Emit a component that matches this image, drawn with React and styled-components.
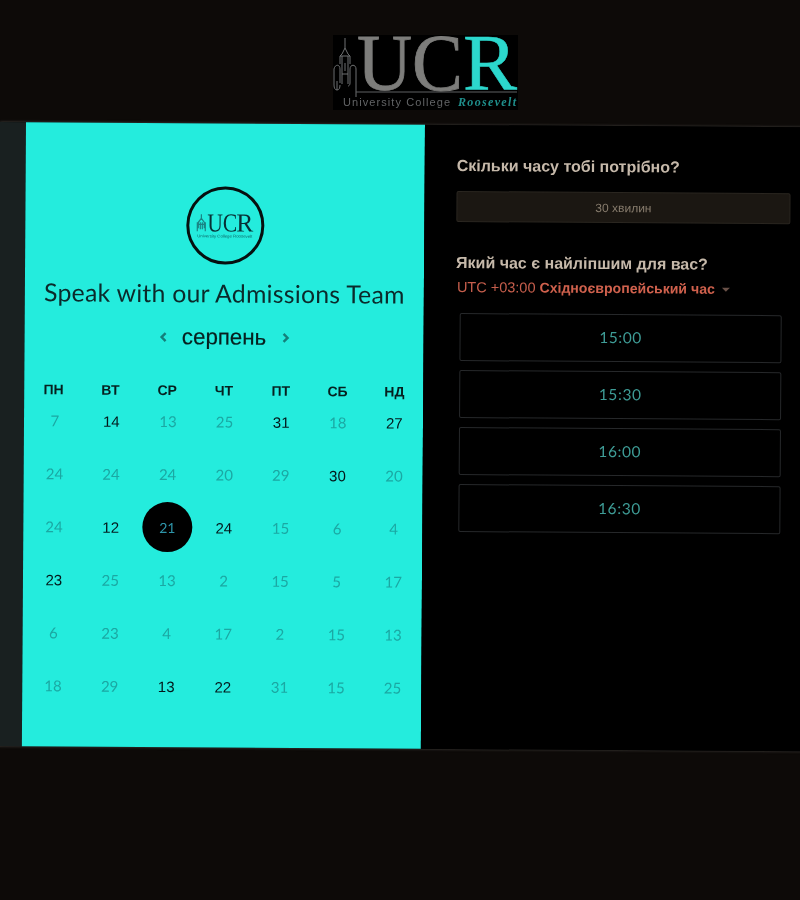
import React from 'react';
import styled, { createGlobalStyle } from 'styled-components';

const Global = createGlobalStyle`
  html, body { margin: 0; padding: 0; background: #0d0a08; }
  body { width: 800px; height: 900px; overflow: hidden; font-family: "Liberation Sans", Arial, sans-serif; }
`;
const Page = styled.div`
  width: 800px; height: 900px; overflow: hidden; background: #0d0a08;
  display: flex; flex-direction: column; filter: blur(0.4px);
`;
const Header = styled.header`
  height: 122px; flex: none; display: flex; justify-content: flex-start; padding: 35px 0 0 333px; box-sizing: border-box;
`;
const Card = styled.main`
  width: 830px; height: 624px; flex: none; display: flex; background: #000;
  transform-origin: 0 0; transform: rotate(0.38deg);
  box-shadow: 0 0 3px rgba(90, 88, 84, .8);
`;
const Strip = styled.div`width: 26px; flex: none; background: #192020;`;
const Left = styled.section`
  width: 399px; flex: none; background: #24ecdd; padding-top: 63px; box-sizing: border-box;
  display: flex; flex-direction: column; align-items: center;
`;
const Avatar = styled.div`
  width: 78px; height: 78px; box-sizing: border-box; border: 3px solid #06100f; border-radius: 50%;
  display: flex; align-items: center; justify-content: center;
`;
const Title = styled.h1`
  margin: 14px 0 0; height: 30px; font: 400 24.8px/30px Lato, sans-serif; color: #0b2a2b; white-space: nowrap; letter-spacing: .25px;
`;
const Month = styled.div`
  margin-top: 14px; height: 30px; display: flex; align-items: center; gap: 8px;
`;
const MonthName = styled.span`font-size: 22.3px; color: #07201f; width: 92px; text-align: center; white-space: nowrap; -webkit-text-stroke: .2px #07201f;`;
const Arrow = styled.svg`width: 14px; height: 14px; flex: none; fill: none; stroke: #14807b; stroke-width: 2.4;`;
const Weeks = styled.div`
  margin-top: 30px; width: 100%; box-sizing: border-box; padding-left: 1px; display: grid; grid-template-columns: repeat(7, 56.8px); height: 16px;
`;
const WeekDay = styled.div`font: 700 14px/16px "Liberation Sans", sans-serif; color: #06201f; text-align: center;`;
const Days = styled.div`
  margin-top: 3px; width: 100%; box-sizing: border-box; padding-left: 2.5px; display: grid; grid-template-columns: repeat(7, 56.6px); grid-auto-rows: 40px; row-gap: 13px;
`;
const Cell = styled.div`display: flex; align-items: center; justify-content: center;`;
const Day = styled.span`
  flex: none; width: 50px; height: 50px; border-radius: 50%; display: flex; align-items: center; justify-content: center;
  font: ${p => p.$state === 'on' ? '400 15px "Liberation Sans", sans-serif' : p.$state === 'sel' ? '400 14px Lato, sans-serif' : '400 15px Lato, sans-serif'};
  color: ${p => p.$state === 'on' ? '#03171a' : p.$state === 'sel' ? '#2e94a8' : '#1ba8a3'};
  background: ${p => p.$state === 'sel' ? '#000' : 'transparent'};
`;
const Right = styled.section`
  flex: 1; background: #000; padding: 31px 0 0 32px; box-sizing: border-box; display: flex; flex-direction: column; align-items: flex-start;
`;
const Heading = styled.h2`
  margin: 0; font: 700 16px/20px "Liberation Sans", sans-serif; color: #c6b9aa; white-space: nowrap;
`;
const Duration = styled.div`
  margin-top: 15px; width: 334px; height: 31px; box-sizing: border-box; background: #1b1712; border: 1px solid #2a2620; border-radius: 2px;
  display: flex; align-items: center; justify-content: center; font-size: 12px; color: #877c6d;
`;
const SecondHeading = styled(Heading)`margin-top: 31px;`;
const Zone = styled.div`
  margin: 4px 0 0 1px; height: 20px; display: flex; align-items: center; gap: 4px; font-size: 14.5px; color: #c65e4c; white-space: nowrap;
`;
const ZoneName = styled.b`font-weight: 700; font-size: 14.1px; color: #d0614d;`;
const Caret = styled.i`
  width: 0; height: 0; margin: 2px 0 0 3px; border: 4px solid transparent; border-bottom-width: 0; border-top-color: #6a5148;
`;
const Slots = styled.div`margin: 16px 0 0 4px; display: flex; flex-direction: column; gap: 9px;`;
const Slot = styled.button`
  width: 322px; height: 48px; box-sizing: border-box; background: #000; border: 1px solid #26282a; border-radius: 2px;
  font: 400 15.5px Lato, sans-serif; letter-spacing: .6px; color: #3e9c96; padding: 0 0 2px;
`;

const UCRLogo = () => (
  <svg width="185" height="75" viewBox="0 0 185 75" role="img" aria-label="UCR">
    <rect width="185" height="75" fill="#000" />
    <g fill="none" stroke="#6f7172" strokeWidth="1">
      <path d="M12 3v10M12 13l-3 6-2 2v8M12 13l3 6 2 2v8M7 21h10M9 21v18h6V21" />
      <path d="M1 34v16c0 3 1 5 3 5v-9M1 34c1-5 6-5 6 0v14M17 34c0-5 6-5 6 0v28M17 34v14c0 2-1 3-2 3M9 39v10M15 39v10M12 28v8M4 55c2 0 3-2 3-5" />
    </g>
    <path d="M23 57h161" stroke="#5f6162" strokeWidth="1" fill="none" />
    <text x="24" y="55" fontFamily="Liberation Serif, serif" fontSize="80" fill="#7d7d7b" stroke="#7d7d7b" strokeWidth=".8" textLength="106" lengthAdjust="spacingAndGlyphs">UC</text>
    <text x="130" y="55" fontFamily="Liberation Serif, serif" fontSize="80" fill="#2cd8cd" stroke="#2cd8cd" strokeWidth=".6" textLength="54" lengthAdjust="spacingAndGlyphs">R</text>
    <text x="10" y="71" fontFamily="Liberation Sans, sans-serif" fontSize="11" fill="#626466" textLength="107" lengthAdjust="spacing">University College</text>
    <text x="125" y="71" fontFamily="Liberation Serif, serif" fontStyle="italic" fontWeight="700" fontSize="12" fill="#1f8f8c" textLength="58" lengthAdjust="spacing">Roosevelt</text>
  </svg>
);

const SmallLogo = () => (
  <svg width="60" height="34" viewBox="0 0 60 34" role="img" aria-label="UCR">
    <g fill="none" stroke="#1a8484" strokeWidth="1.2"><path d="M6 6v4M3 20v-6l3-4 3 4v6M3 16h6M5 14v7M7 14v7M2 14v9M10 14v9" /></g>
    <text x="12" y="23" fontFamily="Liberation Serif, serif" fontSize="26" fill="#082f34" textLength="30" lengthAdjust="spacingAndGlyphs">UC</text>
    <text x="41" y="23" fontFamily="Liberation Serif, serif" fontSize="26" fill="#082f34" textLength="17" lengthAdjust="spacingAndGlyphs">R</text>
    <text x="2" y="29" fontFamily="Liberation Sans, sans-serif" fontSize="4" fill="#0e6465" textLength="55" lengthAdjust="spacingAndGlyphs">University College Roosevelt</text>
  </svg>
);

const weekDays = ['ПН', 'ВТ', 'СР', 'ЧТ', 'ПТ', 'СБ', 'НД'];
const days = [7,14,13,25,31,18,27,24,24,24,20,29,30,20,24,12,21,24,15,6,4,23,25,13,2,15,5,17,6,23,4,17,2,15,13,18,29,13,22,31,15,25];
const activeIndexes = new Set([1, 4, 6, 12, 15, 17, 21, 37, 38]);
const slots = ['15:00', '15:30', '16:00', '16:30'];

export default function App() {
  return (
    <Page>
      <Global />
      <Header><UCRLogo /></Header>
      <Card>
        <Strip />
        <Left>
          <Avatar><SmallLogo /></Avatar>
          <Title>Speak with our Admissions Team</Title>
          <Month>
            <Arrow viewBox="0 0 14 14"><path d="M9 3L5 7l4 4" /></Arrow>
            <MonthName>серпень</MonthName>
            <Arrow viewBox="0 0 14 14"><path d="M5 3l4 4-4 4" /></Arrow>
          </Month>
          <Weeks>{weekDays.map(d => <WeekDay key={d}>{d}</WeekDay>)}</Weeks>
          <Days>
            {days.map((d, i) => (
              <Cell key={i}>
                <Day $state={i === 16 ? 'sel' : activeIndexes.has(i) ? 'on' : 'off'}>{d}</Day>
              </Cell>
            ))}
          </Days>
        </Left>
        <Right>
          <Heading>Скільки часу тобі потрібно?</Heading>
          <Duration>30 хвилин</Duration>
          <SecondHeading>Який час є найліпшим для вас?</SecondHeading>
          <Zone>UTC +03:00 <ZoneName>Східноєвропейський час</ZoneName><Caret /></Zone>
          <Slots>{slots.map(s => <Slot key={s}>{s}</Slot>)}</Slots>
        </Right>
      </Card>
    </Page>
  );
}
